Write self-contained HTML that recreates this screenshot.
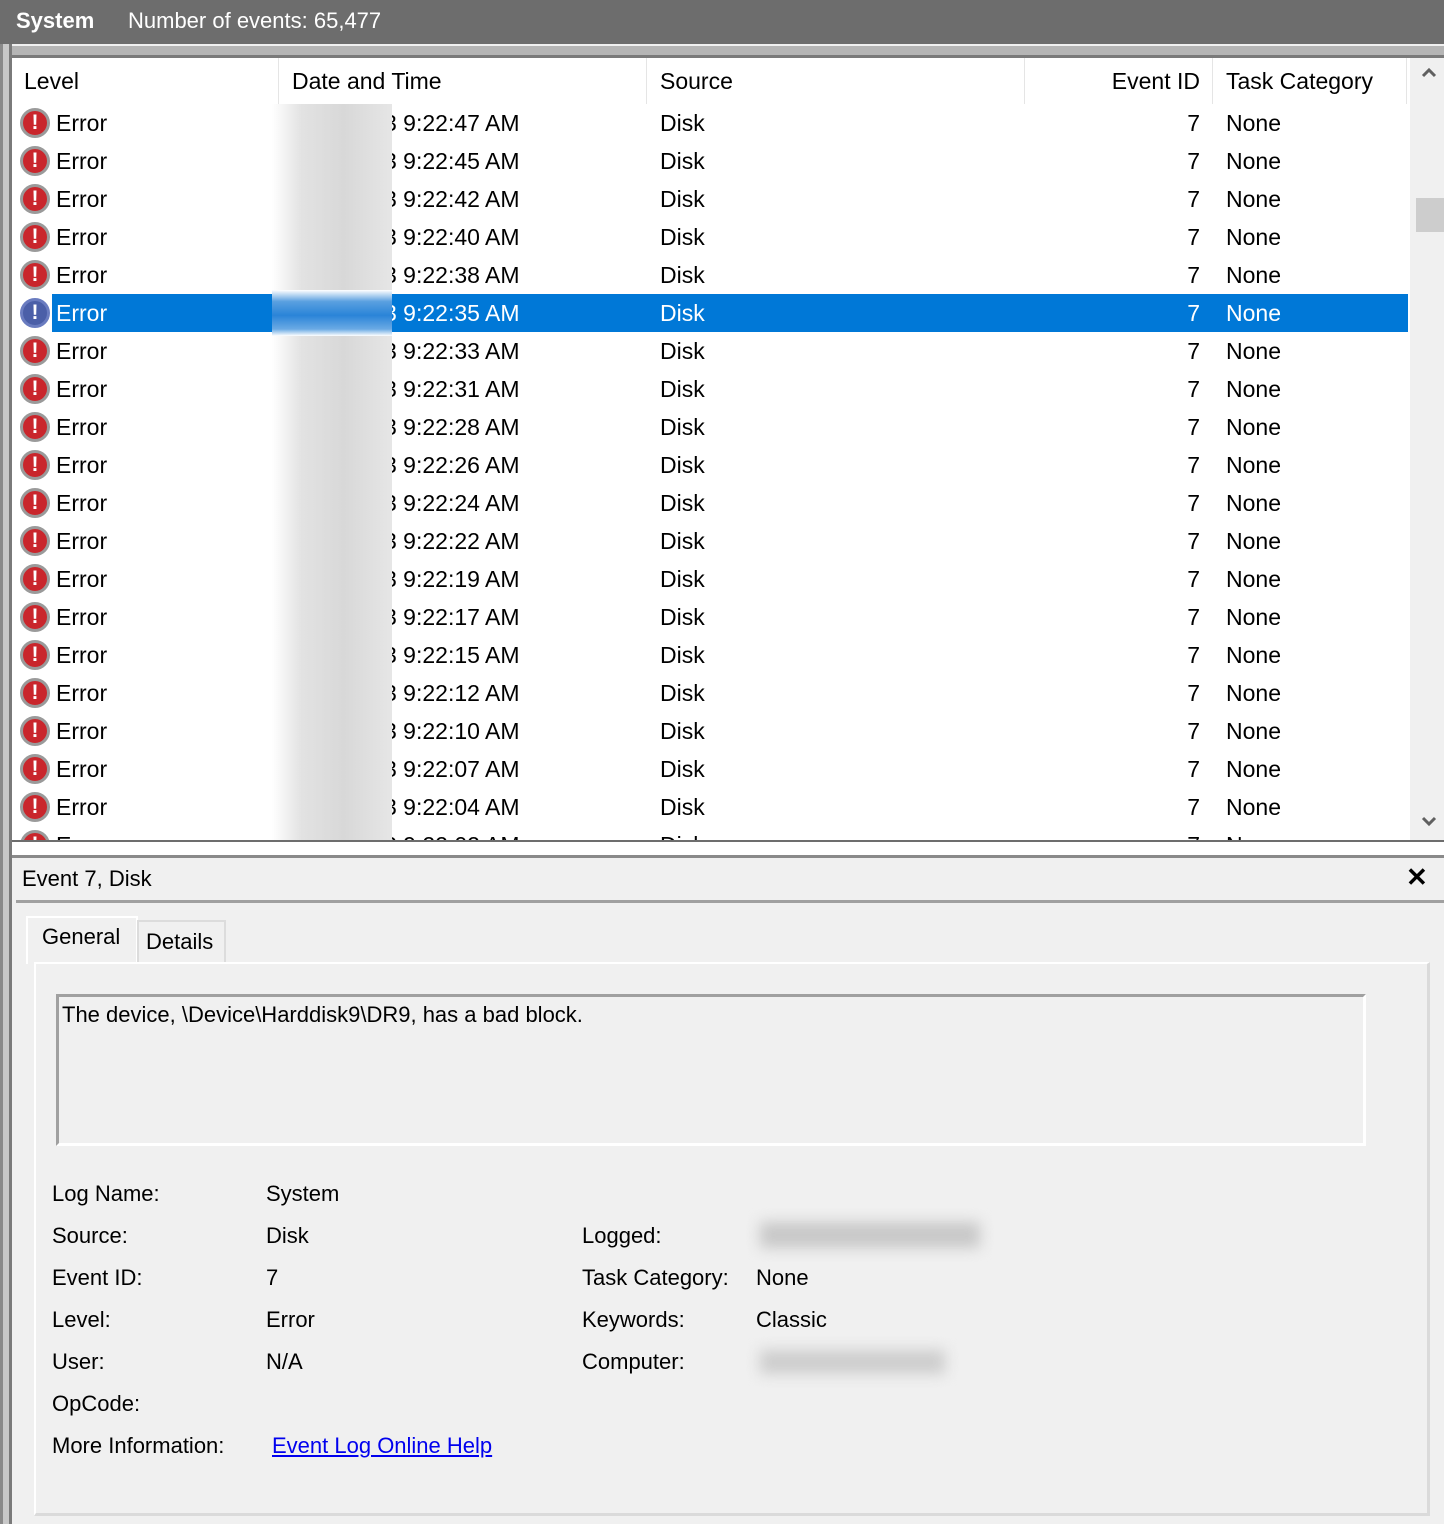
<!DOCTYPE html>
<html><head><meta charset="utf-8"><style>
*{margin:0;padding:0;box-sizing:border-box}
body{width:1444px;height:1524px;background:#f0f0f0;font-family:"Liberation Sans",sans-serif;font-size:22px;color:#000;position:relative;overflow:hidden}
.a{position:absolute;white-space:nowrap}
.top{left:0;top:0;width:1444px;height:44px;background:#6d6d6d;color:#fff}
.list{left:12px;top:58px;width:1398px;height:782px;background:#fff;overflow:hidden;font-size:23px}
.row{position:absolute;left:0;width:1396px;height:38px;line-height:38px}
.row.sel{background:#0078d7;color:#fff}
.ic{position:absolute;left:8px;top:4px;width:30px;height:30px;border-radius:50%;background:#c9262c;border:3px solid #9a9a9a;color:#fff;font-weight:bold;font-size:21px;line-height:24px;text-align:center}
.sel .ic{background:#4b5fa8;border-color:#6a7cc0}
.c1{position:absolute;left:44px}
.c2{position:absolute;left:372px}
.c3{position:absolute;left:648px}
.c4{position:absolute;right:208px}
.c5{position:absolute;left:1214px}
.lbl{left:52px}
</style></head><body>
<div class="a top"><span class="a" style="left:16px;top:8px;font-weight:bold">System</span><span class="a" style="left:128px;top:8px">Number of events: 65,477</span></div>
<div class="a" style="left:0;top:44px;width:1444px;height:14px;background:#b5b5b5;border-top:2px solid #f0f0f0;border-bottom:3px solid #7a7a7a"></div>
<div class="a" style="left:0;top:44px;width:12px;height:1480px;background:#c8c8c8;border-left:3px solid #8a8a8a;border-right:3px solid #7a7a7a"></div>
<div class="a list">
<div class="a" style="left:0;top:0;width:1396px;height:46px">
<span class="a" style="left:12px;top:10px">Level</span>
<span class="a" style="left:266px;top:0;width:1px;height:46px;background:#e5e5e5"></span>
<span class="a" style="left:280px;top:10px">Date and Time</span>
<span class="a" style="left:634px;top:0;width:1px;height:46px;background:#e5e5e5"></span>
<span class="a" style="left:648px;top:10px">Source</span>
<span class="a" style="left:1012px;top:0;width:1px;height:46px;background:#e5e5e5"></span>
<span class="a" style="right:208px;top:10px">Event ID</span>
<span class="a" style="left:1200px;top:0;width:1px;height:46px;background:#e5e5e5"></span>
<span class="a" style="left:1214px;top:10px">Task Category</span>
<span class="a" style="left:1394px;top:0;width:1px;height:46px;background:#e5e5e5"></span>
</div>
<div class="row" style="top:46px"><span class="ic">!</span><span class="c1">Error</span><span class="c2">3 9:22:47 AM</span><span class="c3">Disk</span><span class="c4">7</span><span class="c5">None</span></div>
<div class="row" style="top:84px"><span class="ic">!</span><span class="c1">Error</span><span class="c2">3 9:22:45 AM</span><span class="c3">Disk</span><span class="c4">7</span><span class="c5">None</span></div>
<div class="row" style="top:122px"><span class="ic">!</span><span class="c1">Error</span><span class="c2">3 9:22:42 AM</span><span class="c3">Disk</span><span class="c4">7</span><span class="c5">None</span></div>
<div class="row" style="top:160px"><span class="ic">!</span><span class="c1">Error</span><span class="c2">3 9:22:40 AM</span><span class="c3">Disk</span><span class="c4">7</span><span class="c5">None</span></div>
<div class="row" style="top:198px"><span class="ic">!</span><span class="c1">Error</span><span class="c2">3 9:22:38 AM</span><span class="c3">Disk</span><span class="c4">7</span><span class="c5">None</span></div>
<div class="row sel" style="top:236px;left:40px;width:1356px"><span class="ic" style="left:-32px">!</span><span class="c1" style="left:4px">Error</span><span class="c2" style="left:332px">3 9:22:35 AM</span><span class="c3" style="left:608px">Disk</span><span class="c4">7</span><span class="c5" style="left:1174px">None</span></div>
<div class="row" style="top:274px"><span class="ic">!</span><span class="c1">Error</span><span class="c2">3 9:22:33 AM</span><span class="c3">Disk</span><span class="c4">7</span><span class="c5">None</span></div>
<div class="row" style="top:312px"><span class="ic">!</span><span class="c1">Error</span><span class="c2">3 9:22:31 AM</span><span class="c3">Disk</span><span class="c4">7</span><span class="c5">None</span></div>
<div class="row" style="top:350px"><span class="ic">!</span><span class="c1">Error</span><span class="c2">3 9:22:28 AM</span><span class="c3">Disk</span><span class="c4">7</span><span class="c5">None</span></div>
<div class="row" style="top:388px"><span class="ic">!</span><span class="c1">Error</span><span class="c2">3 9:22:26 AM</span><span class="c3">Disk</span><span class="c4">7</span><span class="c5">None</span></div>
<div class="row" style="top:426px"><span class="ic">!</span><span class="c1">Error</span><span class="c2">3 9:22:24 AM</span><span class="c3">Disk</span><span class="c4">7</span><span class="c5">None</span></div>
<div class="row" style="top:464px"><span class="ic">!</span><span class="c1">Error</span><span class="c2">3 9:22:22 AM</span><span class="c3">Disk</span><span class="c4">7</span><span class="c5">None</span></div>
<div class="row" style="top:502px"><span class="ic">!</span><span class="c1">Error</span><span class="c2">3 9:22:19 AM</span><span class="c3">Disk</span><span class="c4">7</span><span class="c5">None</span></div>
<div class="row" style="top:540px"><span class="ic">!</span><span class="c1">Error</span><span class="c2">3 9:22:17 AM</span><span class="c3">Disk</span><span class="c4">7</span><span class="c5">None</span></div>
<div class="row" style="top:578px"><span class="ic">!</span><span class="c1">Error</span><span class="c2">3 9:22:15 AM</span><span class="c3">Disk</span><span class="c4">7</span><span class="c5">None</span></div>
<div class="row" style="top:616px"><span class="ic">!</span><span class="c1">Error</span><span class="c2">3 9:22:12 AM</span><span class="c3">Disk</span><span class="c4">7</span><span class="c5">None</span></div>
<div class="row" style="top:654px"><span class="ic">!</span><span class="c1">Error</span><span class="c2">3 9:22:10 AM</span><span class="c3">Disk</span><span class="c4">7</span><span class="c5">None</span></div>
<div class="row" style="top:692px"><span class="ic">!</span><span class="c1">Error</span><span class="c2">3 9:22:07 AM</span><span class="c3">Disk</span><span class="c4">7</span><span class="c5">None</span></div>
<div class="row" style="top:730px"><span class="ic">!</span><span class="c1">Error</span><span class="c2">3 9:22:04 AM</span><span class="c3">Disk</span><span class="c4">7</span><span class="c5">None</span></div>
<div class="row" style="top:768px"><span class="ic">!</span><span class="c1">Error</span><span class="c2">3 9:22:02 AM</span><span class="c3">Disk</span><span class="c4">7</span><span class="c5">None</span></div>
<div class="a" style="left:260px;top:46px;width:120px;height:740px;background:linear-gradient(90deg,#fff 0%,#e2e2e2 25%,#d8d8d8 60%,#e6e6e6 100%)"></div>
<div class="a" style="left:260px;top:232px;width:120px;height:46px;background:linear-gradient(180deg,#fff 0%,#5aa0e0 25%,#2a84d8 55%,#6aaae4 85%,#fff 100%)"></div>
</div>
<div class="a" style="left:1410px;top:58px;width:34px;height:782px;background:#f0f0f0"></div>
<svg class="a" style="left:1421px;top:66px" width="16" height="12" viewBox="0 0 16 12"><path d="M2 10 L8 4 L14 10" fill="none" stroke="#606060" stroke-width="3"/></svg>
<div class="a" style="left:1416px;top:198px;width:28px;height:34px;background:#cdcdcd"></div>
<svg class="a" style="left:1421px;top:816px" width="16" height="12" viewBox="0 0 16 12"><path d="M2 2 L8 8 L14 2" fill="none" stroke="#606060" stroke-width="3"/></svg>
<div class="a" style="left:12px;top:840px;width:1432px;height:18px;background:#fff;border-top:2px solid #6d6d6d;border-bottom:3px solid #8a8a8a"></div>
<span class="a" style="left:22px;top:866px">Event 7, Disk</span>
<span class="a" style="left:1406px;top:862px;font-weight:bold;font-size:26px">&#10005;</span>
<div class="a" style="left:16px;top:900px;width:1428px;height:3px;background:#a0a0a0"></div>
<div class="a" style="left:26px;top:916px;width:112px;height:48px;background:#f0f0f0;border:2px solid #fff;border-bottom:none"></div>
<span class="a" style="left:42px;top:924px">General</span>
<div class="a" style="left:137px;top:920px;width:89px;height:42px;background:#f0f0f0;border:2px solid #dcdcdc;border-bottom:none"></div>
<span class="a" style="left:146px;top:929px">Details</span>
<div class="a" style="left:34px;top:962px;width:1396px;height:554px;border:2px solid #fff;border-right:3px solid #dadada;border-bottom:3px solid #dadada"></div>
<div class="a" style="left:56px;top:994px;width:1310px;height:152px;border:3px solid #a0a0a0;border-right:3px solid #fff;border-bottom:3px solid #fff"></div>
<span class="a" style="left:62px;top:1002px">The device, \Device\Harddisk9\DR9, has a bad block.</span>
<span class="a lbl" style="top:1181px">Log Name:</span><span class="a" style="left:266px;top:1181px">System</span>
<span class="a lbl" style="top:1223px">Source:</span><span class="a" style="left:266px;top:1223px">Disk</span>
<span class="a lbl" style="top:1265px">Event ID:</span><span class="a" style="left:266px;top:1265px">7</span>
<span class="a lbl" style="top:1307px">Level:</span><span class="a" style="left:266px;top:1307px">Error</span>
<span class="a lbl" style="top:1349px">User:</span><span class="a" style="left:266px;top:1349px">N/A</span>
<span class="a lbl" style="top:1391px">OpCode:</span>
<span class="a lbl" style="top:1433px">More Information:</span><span class="a" style="left:272px;top:1433px;color:#0000ee;text-decoration:underline">Event Log Online Help</span>
<span class="a" style="left:582px;top:1223px">Logged:</span>
<span class="a" style="left:582px;top:1265px">Task Category:</span><span class="a" style="left:756px;top:1265px">None</span>
<span class="a" style="left:582px;top:1307px">Keywords:</span><span class="a" style="left:756px;top:1307px">Classic</span>
<span class="a" style="left:582px;top:1349px">Computer:</span>
<div class="a" style="left:760px;top:1222px;width:220px;height:26px;background:#c8c8c8;filter:blur(7px)"></div>
<div class="a" style="left:760px;top:1350px;width:185px;height:24px;background:#cdcdcd;filter:blur(7px)"></div>
</body></html>
